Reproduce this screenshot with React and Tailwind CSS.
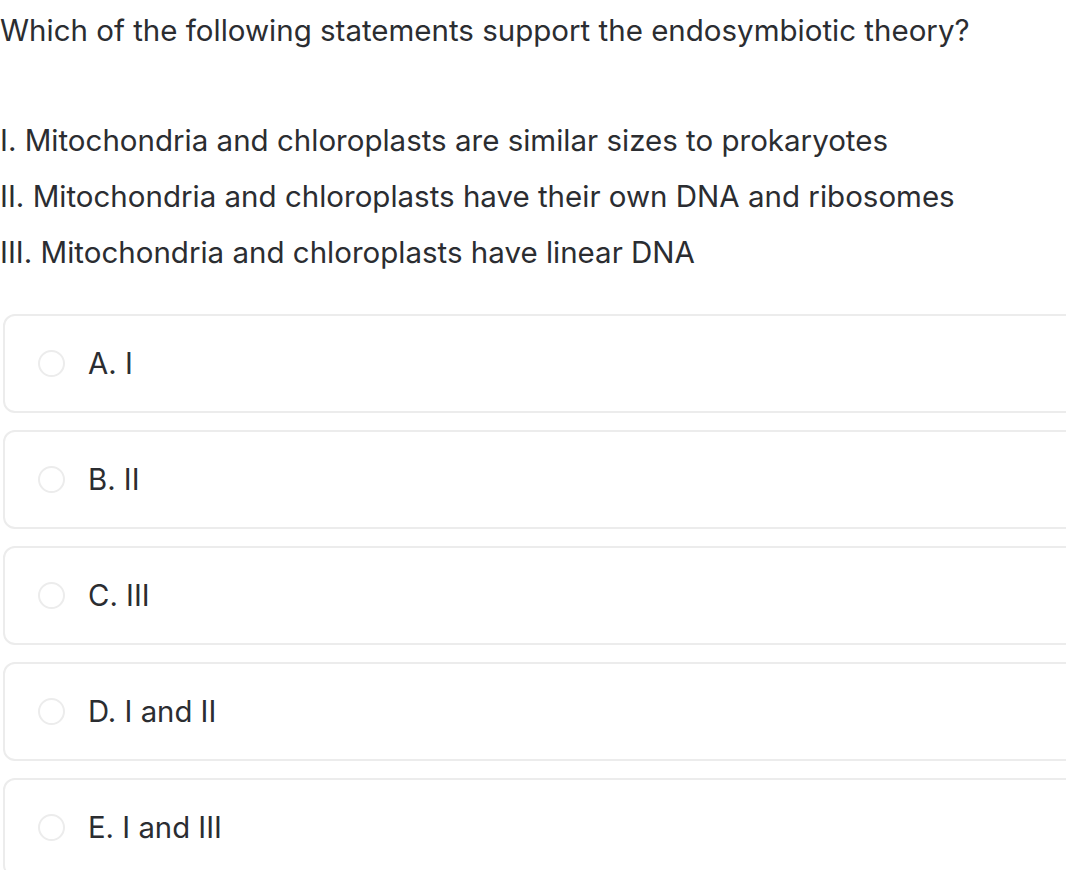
import React from "react";

const statements = [
  "I. Mitochondria and chloroplasts are similar sizes to prokaryotes",
  "II. Mitochondria and chloroplasts have their own DNA and ribosomes",
  "III. Mitochondria and chloroplasts have linear DNA",
];

const options = ["A. I", "B. II", "C. III", "D. I and II", "E. I and III"];

function Option({ label }) {
  return (
    <div className="h-[99px] w-[1100px] ml-[3px] rounded-[12px] border-2 border-[#ececec] flex items-center pl-[33px]">
      <span className="w-[27px] h-[27px] rounded-full border-2 border-[#ececec] shrink-0" />
      <span className="ml-[23px] text-[29.3px] text-[#2b2d31]">{label}</span>
    </div>
  );
}

export default function App() {
  return (
    <div
      className="w-[1066px] h-[870px] overflow-hidden bg-white text-[#2b2d31]"
      style={{ fontFamily: "Inter, 'Noto Sans', sans-serif" }}
    >
      <div className="text-[29.5px] leading-[36px] pt-[12px]">
        Which of the following statements support the endosymbiotic theory?
      </div>
      <div className="mt-[74px] flex flex-col gap-[20px] text-[29.5px] leading-[36px]">
        {statements.map((s) => (
          <div key={s}>{s}</div>
        ))}
      </div>
      <div className="mt-[44px] flex flex-col gap-[17px]">
        {options.map((o) => (
          <Option key={o} label={o} />
        ))}
      </div>
    </div>
  );
}
